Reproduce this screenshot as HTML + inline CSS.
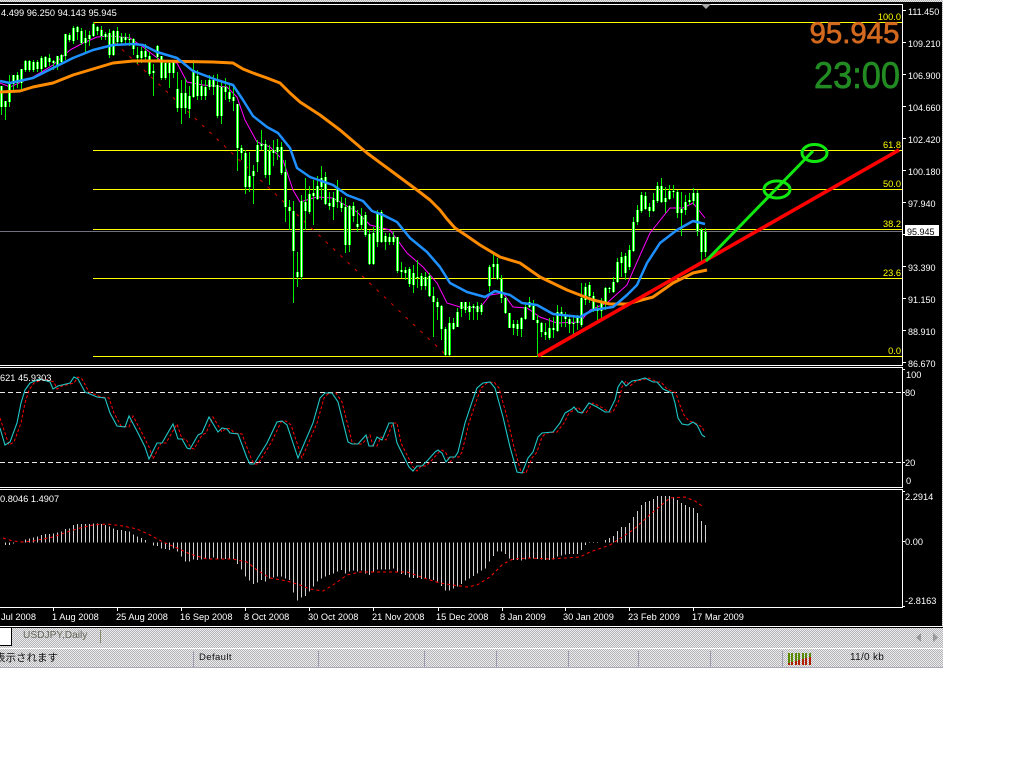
<!DOCTYPE html>
<html><head><meta charset="utf-8"><style>
html,body{margin:0;padding:0;background:#fff;width:1024px;height:768px;overflow:hidden}
svg{display:block;position:absolute;left:0;top:0}
.dots{position:absolute;background:repeating-conic-gradient(#b4b4b8 0 25%,#ececec 0 50%) 0 0/2px 2px}
.t{position:absolute;font:10px/12px "Liberation Sans","Noto Sans CJK JP",sans-serif;white-space:nowrap}
.sep{position:absolute;top:651px;width:1px;height:16px;background:#9c9cb0}
text{font-family:"Liberation Sans",sans-serif;font-size:9.25px;fill:#fff}
text.p{font-size:9px}
text.y{fill:#ffff00;text-anchor:end}
</style></head><body>
<div class="dots" style="left:0;top:0;width:943px;height:2px"></div>
<div style="position:absolute;left:0;top:2px;width:942px;height:624px;background:#000"></div>
<div class="dots" style="left:942px;top:2px;width:1px;height:624px"></div>
<div style="position:absolute;left:0;top:627px;width:943px;height:1px;background:#000"></div>
<div class="dots" style="left:0;top:628px;width:943px;height:20px"></div>
<div class="dots" style="left:0;top:649px;width:943px;height:18px"></div>
<div style="position:absolute;left:0;top:667px;width:943px;height:1px;background:#a8a8b8"></div>
<div style="position:absolute;left:0;top:628px;width:11px;height:17px;background:#fff;border-right:1px solid #000;border-bottom:1px solid #000"></div>
<div style="position:absolute;left:100px;top:630px;width:1px;height:13px;background:#8a8a70"></div>
<div class="t" style="left:23px;top:630px;color:#66665a;font-size:10.2px">USDJPY,Daily</div>
<div class="t" style="left:-5px;top:651px;color:#111;font-size:10.5px;line-height:14px">表示されます</div>
<div class="t" style="left:199px;top:652px;color:#111;font-size:9.5px;letter-spacing:.4px">Default</div>
<div class="t" style="left:850px;top:652px;color:#111;font-size:10px;letter-spacing:.3px">11/0 kb</div>
<div class="sep" style="left:193px"></div><div class="sep" style="left:318px"></div><div class="sep" style="left:424px"></div><div class="sep" style="left:496px"></div><div class="sep" style="left:568px"></div><div class="sep" style="left:638px"></div><div class="sep" style="left:710px"></div><div class="sep" style="left:782px"></div>
<svg width="1024" height="768" viewBox="0 0 1024 768">
<defs>
<path id="bd" d="M1 86V107M5 101V107M9 83V102M13 75V84M17 75V83M21 69V83M25 61V70M29 61V70M33 62V70M37 62V69M41 58V69M45 57V67M49 58V62M53 61V63M57 56V66M61 55V62M65 34V56M69 35V40M73 28V41M77 27V32M81 31V43M85 38V43M89 35V39M93 24V36M97 27V31M101 30V36M105 34V37M109 33V55M113 31V55M117 31V42M121 37V42M125 37V40M129 39V40M133 39V49M137 55V58M141 51V58M145 51V57M149 56V74M153 71V73M157 46V57M161 56V78M165 63V78M169 63V73M173 62V73M177 89V108M181 93V108M185 93V108M189 96V109M193 70V97M197 76V96M201 86V96M205 87V96M209 80V87M213 80V87M217 85V116M221 87V116M225 87V92M229 92V99M233 97V101M237 104V148M241 148V153M245 153V187M249 176V187M253 171V176M257 145V162M261 144V146M265 144V175M269 151V175M273 150V153M277 147V152M281 147V173M285 172V207M289 207V211M293 211V251M297 272V277M301 201V277M305 202V211M309 194V212M313 193V196M317 186V199M321 178V187M325 177V204M329 203V206M333 198V207M337 188V202M341 203V208M345 207V245M349 206V245M353 206V216M357 224V227M361 216V225M365 215V235M369 234V264M373 233V264M377 212V242M381 212V242M385 236V242M389 237V242M393 237V242M397 237V271M401 270V272M405 270V273M409 269V284M413 273V285M417 277V278M421 276V286M425 277V286M429 276V296M433 296V302M437 302V307M441 306V329M445 329V355M449 323V355M453 323V329M457 312V327M461 302V309M465 302V310M469 306V312M473 306V308M477 306V312M481 305V312M489 267V286M493 264V267M497 264V279M501 279V298M505 298V313M509 313V328M513 324V328M517 324V329M521 318V329M525 307V319M529 302V307M533 306V320M537 320V323M541 323V332M545 332V335M549 328V338M553 328V330M557 312V331M561 312V316M565 315V319M569 319V324M573 323V324M577 318V323M581 298V325M585 287V300M589 285V296M593 296V310M597 310V311M601 302V311M605 288V303M609 288V289M613 282V292M617 262V282M621 257V263M625 256V273M629 250V267M633 222V251M637 210V222M641 195V211M645 196V209M649 207V211M653 200V211M657 186V201M661 186V202M665 198V202M669 191V199M673 191V192M677 192V213M681 209V213M685 202V210M689 200V202M693 193V201M697 193V231M701 230V252M705 232V252"/>
</defs>
<g shape-rendering="crispEdges">
<path d="M0 231.5H902" stroke="#70707e" stroke-width="1" fill="none"/>
<path d="M93 22.5H902M93 150.5H902M93 189.5H902M93 229.5H902M93 278.5H902M93 356.5H902" stroke="#ffff00" stroke-width="1" fill="none"/>
</g>
<path d="M93 22L447 356" stroke="#e00000" stroke-width="1" stroke-dasharray="3 7" fill="none"/>
<polyline fill="none" stroke="#ff00ff" stroke-width="1" points="0,83 10,87 33,77 53,65 70,50 83,43 97,37 110,36 130,38 143,47 160,60 177,63 187,82 203,85 227,87 237,97 245,120 257,142 270,147 283,160 293,190 300,202 317,197 333,198 340,202 357,212 370,225 390,230 407,253 423,267 437,283 447,303 460,307 480,308 490,295 503,293 513,307 527,308 540,317 557,323 580,322 590,310 607,303 627,285 637,262 650,233 670,208 683,208 693,203 705,218"/>
<g transform="translate(.5,0)" shape-rendering="crispEdges" fill="none">
<path stroke="#00f000" stroke-width="1" d="M1 86V115M5 101V120M9 75V107M13 75V90M17 72V88M21 69V90M25 60V72M29 60V72M33 60V72M37 60V72M41 56V72M45 56V68M49 54V66M53 60V70M57 56V70M61 54V65M65 34V60M69 33V42M73 26V44M77 26V40M81 28V45M85 30V54M89 31V46M93 22V37M97 26V35M101 26V40M105 32V40M109 29V58M113 30V56M117 27V45M121 33V44M125 33V45M129 34V46M133 38V55M137 47V64M141 47V63M145 44V60M149 52V76M153 64V96M157 45V60M161 56V80M165 60V80M169 60V88M173 60V78M177 72V112M181 80V124M185 78V114M189 86V118M193 60V98M197 70V100M201 80V100M205 80V100M209 75V90M213 75V95M217 74V118M221 80V124M225 78V100M229 85V102M233 85V111M237 104V171M241 145V160M245 150V194M249 152V192M253 165V204M257 140V172M261 130V150M265 140V178M269 145V185M273 140V166M277 139V160M281 142V175M285 160V222M289 200V230M293 201V303M297 252V287M301 195V280M305 178V230M309 186V214M313 180V225M317 176V200M321 166V200M325 172V205M329 192V210M333 192V220M337 180V208M341 197V212M345 198V253M349 205V252M353 202V222M357 210V232M361 208V230M365 212V237M369 230V265M373 227V265M377 210V247M381 210V243M385 233V250M389 233V245M393 232V245M397 237V273M401 262V278M405 267V280M409 267V287M413 265V293M417 260V288M421 273V290M425 272V290M429 273V297M433 287V337M437 298V320M441 305V340M445 327V356M449 317V356M453 318V330M457 308V327M461 302V317M465 302V313M469 302V320M473 304V320M477 302V320M481 303V315M489 265V292M493 252V278M497 258V280M501 275V303M505 297V314M509 313V328M513 320V335M517 320V336M521 317V337M525 303V320M529 297V308M533 300V320M537 315V357M541 322V337M545 323V340M549 318V340M553 317V338M557 305V332M561 307V327M565 312V327M569 315V333M573 317V335M577 315V330M581 283V327M585 283V305M589 282V303M593 292V312M597 305V320M601 298V320M605 287V310M609 287V293M613 277V293M617 258V283M621 252V277M625 253V280M629 245V270M633 217V252M637 205V225M641 192V213M645 192V210M649 203V217M653 193V212M657 182V203M661 178V203M665 187V213M669 185V200M673 185V198M677 190V218M681 192V236M685 195V215M689 193V205M693 188V205M697 190V236M701 228V262M705 228V257"/>
<use href="#bd" stroke="#00f000" stroke-width="3"/>
<use href="#bd" stroke="#f4fff4" stroke-width="1"/>
</g>
<polyline fill="none" stroke="#ff8c00" stroke-width="3" stroke-linejoin="round" points="0,92 20,91 33,87 53,83 73,75 93,69 113,63 133,61 157,61 213,62 233,63 243,69 253,73 267,78 280,83 290,93 300,102 320,115 340,130 367,153 390,170 417,190 430,200 440,210 447,219 455,228 467,236 480,245 500,257 520,263 540,277 567,290 593,300 610,304 627,304 653,297 673,283 693,273 707,270"/>
<polyline fill="none" stroke="#1e90ff" stroke-width="2.5" stroke-linejoin="round" points="0,81 10,83 33,78 53,68 73,58 93,50 113,45 133,44 143,45 157,52 177,58 193,71 217,80 233,85 243,100 253,116 267,127 278,133 290,148 297,168 310,177 333,185 347,195 363,201 372,211 383,215 397,222 410,238 427,252 440,267 450,283 467,292 485,297 495,291 510,295 522,303 537,305 553,314 580,317 593,310 613,307 627,295 637,285 647,263 660,243 677,230 693,221 705,224"/>
<path d="M538 356L899 150" stroke="#ff0000" stroke-width="3.6" fill="none"/>
<path d="M706 261L813 151" stroke="#10e810" stroke-width="3" fill="none"/>
<ellipse cx="814.5" cy="153" rx="12.5" ry="8.5" fill="none" stroke="#10e810" stroke-width="3"/>
<ellipse cx="777" cy="189.5" rx="13" ry="8.5" fill="none" stroke="#10e810" stroke-width="3"/>
<path d="M0 392.5H902M0 462.5H902" stroke="#e8e8e8" stroke-width="1" stroke-dasharray="5 3" fill="none" shape-rendering="crispEdges"/>
<polyline fill="none" stroke="#ff0000" stroke-dasharray="3 2" stroke-width="1" points="0,418 4,430 9,445 14,442 21,423 25,403 29,390 34,383 44,379 54,382 57,389 62,386 74,383 78,377 82,379 89,392 101,397 109,398 114,413 121,426 129,427 133,416 142,433 149,447 153,459 161,443 166,443 177,424 182,439 186,439 191,448 194,449 202,435 206,433 213,417 222,432 226,428 231,429 234,433 242,434 251,458 254,464 258,464 271,443 281,422 286,421 291,425 297,443 302,458 317,423 324,398 329,393 336,393 342,402 352,442 356,444 362,444 370,435 373,446 377,446 381,437 386,440 393,423 397,423 401,443 407,455 413,467 417,471 421,466 426,466 432,460 439,452 442,450 446,453 450,462 454,457 459,457 462,452 469,423 476,402 481,388 487,383 494,382 499,388 507,417 514,447 521,472 526,473 532,458 537,452 542,437 546,433 557,432 564,423 569,413 576,409 578,407 582,412 586,413 593,403 601,407 609,412 613,412 619,400 622,387 626,381 630,386 636,381 642,380 649,378 657,382 661,382 667,389 676,393 679,403 684,415 689,421 695,423 702,427 704,431"/>
<polyline fill="none" stroke="#20c8c8" stroke-width="1.1" points="0,428 5,445 10,442 17,423 21,403 25,390 30,383 40,379 50,382 53,389 58,386 70,383 74,377 78,379 85,392 97,397 105,398 110,413 117,426 125,427 129,416 138,433 145,447 149,459 157,443 162,443 173,424 178,439 182,439 187,448 190,449 198,435 202,433 209,417 218,432 222,428 227,429 230,433 238,434 247,458 250,464 254,464 267,443 277,422 282,421 287,425 293,443 298,458 313,423 320,398 325,393 332,393 338,402 348,442 352,444 358,444 366,435 369,446 373,446 377,437 382,440 389,423 393,423 397,443 403,455 409,467 413,471 417,466 422,466 428,460 435,452 438,450 442,453 446,462 450,457 455,457 458,452 465,423 472,402 477,388 483,383 490,382 495,388 503,417 510,447 517,472 522,473 528,458 533,452 538,437 542,433 553,432 560,423 565,413 572,409 574,407 578,412 582,413 589,403 597,407 605,412 609,412 615,400 618,387 622,381 626,386 632,381 638,380 645,378 653,382 657,382 663,389 672,393 675,403 678,418 682,424 688,425 693,422 697,425 702,435 705,437"/>
<g transform="translate(.5,360) scale(1,.33333)" fill="none" stroke="#d0d0d0" stroke-width="1" shape-rendering="crispEdges">
<path vector-effect="non-scaling-stroke" d="M1 547V548M5 547V555M9 547V555M13 547V550M21 547V545M25 547V538M29 547V536M33 547V532M37 547V530M41 547V525M45 547V522M49 547V522M53 547V520M57 547V518M61 547V515M65 547V507M69 547V505M73 547V495M77 547V492M81 547V492M85 547V492M89 547V492M93 547V490M97 547V490M101 547V492M105 547V495M109 547V500M113 547V505M117 547V510M121 547V510M125 547V513M129 547V515M133 547V523M137 547V530M141 547V534M145 547V540M153 547V557M157 547V558M161 547V565M165 547V567M169 547V570M173 547V565M177 547V575M181 547V590M185 547V605M189 547V605M193 547V598M197 547V600M201 547V598M205 547V596M209 547V597M213 547V592M217 547V597M221 547V597M225 547V597M229 547V597M233 547V597M237 547V612M241 547V628M245 547V650M249 547V662M253 547V672M257 547V668M261 547V660M265 547V665M269 547V655M273 547V653M277 547V650M281 547V650M285 547V655M289 547V660M293 547V698M297 547V722M301 547V712M305 547V708M309 547V695M313 547V680M317 547V665M321 547V655M325 547V650M329 547V645M333 547V640M337 547V635M341 547V630M345 547V640M349 547V635M353 547V632M357 547V635M361 547V632M365 547V640M369 547V645M373 547V638M377 547V628M381 547V628M385 547V628M389 547V628M393 547V625M397 547V635M401 547V642M405 547V645M409 547V652M413 547V654M417 547V654M421 547V657M425 547V655M429 547V657M433 547V660M437 547V665M441 547V678M445 547V692M449 547V692M453 547V685M457 547V680M461 547V672M465 547V662M469 547V655M473 547V648M477 547V640M481 547V632M485 547V625M489 547V605M493 547V588M497 547V575M501 547V575M505 547V582M509 547V595M513 547V600M517 547V600M521 547V602M525 547V598M529 547V595M533 547V595M537 547V597M541 547V598M545 547V600M549 547V600M553 547V598M557 547V590M561 547V587M565 547V584M569 547V582M573 547V582M577 547V582M581 547V570M585 547V555M589 547V549M593 547V549M597 547V549M605 547V540M609 547V534M613 547V528M617 547V513M621 547V501M625 547V501M629 547V489M633 547V471M637 547V453M641 547V435M645 547V426M649 547V423M653 547V417M657 547V408M661 547V408M665 547V408M669 547V408M673 547V411M677 547V420M681 547V429M685 547V435M689 547V441M693 547V444M697 547V459M701 547V483M705 547V495"/>
</g>
<polyline fill="none" stroke="#ff0000" stroke-width="1" stroke-dasharray="3 3" points="3,538 13,541 23,542 33,541 43,539 53,537 67,532 80,528 93,525 107,524 123,526 137,529 150,535 163,542 177,548 190,554 207,559 233,559 247,562 257,570 270,578 287,581 300,585 310,589 323,591 333,585 347,575 360,572 377,572 393,572 407,572 427,579 440,583 453,585 467,587 477,585 490,577 503,564 513,559 530,558 550,559 580,557 590,552 610,545 633,530 653,512 670,498 685,497 695,501 702,506"/>
<g stroke="#fff" stroke-width="1" fill="none" shape-rendering="crispEdges">
<path d="M0 4.5H902.5V365.5H0M0 367.5H902.5V487.5H0M0 489.5H902.5V607.5H0"/>
<path d="M902 10.5H906M902 42.5H906M902 74.5H906M902 106.5H906M902 138.5H906M902 170.5H906M902 202.5H906M902 234.5H906M902 266.5H906M902 298.5H906M902 330.5H906M902 362.5H906M902 392.5H905M902 462.5H905M902 369.5H905M902 491.5H905M902 541.5H905M902 606.5H905"/>
<path d="M53.5 607V611M117.5 607V611M181.5 607V611M245.5 607V611M309.5 607V611M373.5 607V611M438.5 607V611M502.5 607V611M565.5 607V611M629.5 607V611M693.5 607V611"/>
</g>
<path d="M701 4H711L706 9Z" fill="#a8a8a8"/>
<text class="p" x="908" y="15">111.450</text><text class="p" x="908" y="47">109.210</text><text class="p" x="908" y="79">106.900</text><text class="p" x="908" y="111">104.660</text><text class="p" x="908" y="143">102.420</text><text class="p" x="908" y="175">100.180</text><text class="p" x="908" y="207">97.940</text><text class="p" x="908" y="271">93.390</text><text class="p" x="908" y="303">91.150</text><text class="p" x="908" y="335">88.910</text><text class="p" x="908" y="367">86.670</text>
<text x="906" y="378">100</text><text x="905" y="396">80</text><text x="905" y="466">20</text><text x="906" y="484">0</text>
<text x="905" y="500">2.2914</text><text x="905" y="545">0.00</text><text x="905" y="604">-2.8163</text>
<rect x="905" y="225" width="34" height="11" fill="#fff"/>
<text class="p" x="907" y="235" style="fill:#000">95.945</text>
<text class="y" x="901" y="20">100.0</text><text class="y" x="901" y="148">61.8</text><text class="y" x="901" y="187">50.0</text><text class="y" x="901" y="227">38.2</text><text class="y" x="901" y="276">23.6</text><text class="y" x="901" y="354">0.0</text>
<text x="809.5" y="43" style="font-size:30px;fill:#d2691e;stroke:#d2691e;stroke-width:.7" textLength="90" lengthAdjust="spacingAndGlyphs">95.945</text>
<text x="814" y="88" style="font-size:37px;fill:#228b22;stroke:#228b22;stroke-width:.7" textLength="86" lengthAdjust="spacingAndGlyphs">23:00</text>
<text x="1" y="16">4.499 96.250 94.143 95.945</text>
<text x="0" y="381">621 45.9303</text>
<text x="0" y="502">0.8046 1.4907</text>
<text x="1" y="620">Jul 2008</text><text x="52" y="620">1 Aug 2008</text><text x="116" y="620">25 Aug 2008</text><text x="180" y="620">16 Sep 2008</text><text x="244" y="620">8 Oct 2008</text><text x="308" y="620">30 Oct 2008</text><text x="372" y="620">21 Nov 2008</text><text x="436" y="620">15 Dec 2008</text><text x="500" y="620">8 Jan 2009</text><text x="563" y="620">30 Jan 2009</text><text x="628" y="620">23 Feb 2009</text><text x="692" y="620">17 Mar 2009</text>
<path d="M921 633V642L916 637.5ZM933 633V642L938 637.5Z" fill="#999"/>
<g shape-rendering="crispEdges">
<path d="M788 653h2v12h-2zM791 653h2v12h-2zM795 653h2v12h-2zM798 653h2v12h-2zM802 653h2v12h-2zM805 653h2v12h-2zM809 653h2v12h-2z" fill="#5a8a00"/>
<path d="M788 663h2v2h-2zM791 662h2v3h-2zM795 661h2v4h-2zM798 660h2v5h-2zM802 659h2v6h-2zM805 658h2v7h-2zM809 657h2v8h-2z" fill="#b02000"/>
</g>
</svg>
</body></html>
